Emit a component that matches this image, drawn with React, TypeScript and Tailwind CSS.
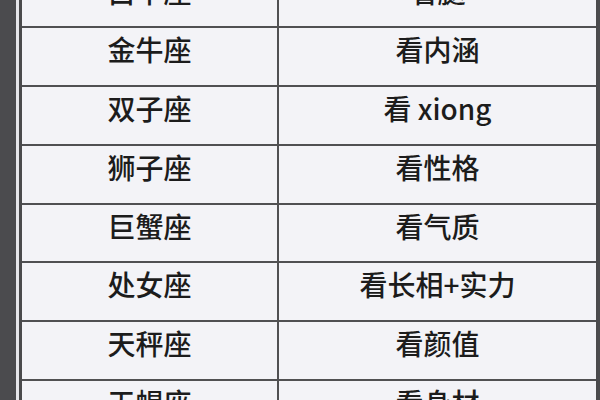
const rows = [
  ['白羊座', '看腿'],
  ['金牛座', '看内涵'],
  ['双子座', '看 xiong'],
  ['狮子座', '看性格'],
  ['巨蟹座', '看气质'],
  ['处女座', '看长相+实力'],
  ['天秤座', '看颜值'],
  ['天蝎座', '看身材'],
]

export default function App() {
  return (
    <div
      className="flex h-[400px] w-[600px] overflow-hidden bg-[#4b4b4e]"
      style={{ fontFamily: '"Noto Sans CJK SC", "Noto Sans", sans-serif' }}
    >
      <div className="w-[16px] shrink-0" />
      <div className="w-[3px] shrink-0 bg-[#e6e6ea]" />
      <div className="flex-1 border-l-[3px] border-r-[2px] border-[#4a4a4c] bg-[#f3f3f7] mr-[2px]">
        <div className="-mt-[30.5px] flex flex-col">
          {rows.map(([sign, trait]) => (
            <div
              key={sign}
              className="grid h-[58.8px] grid-cols-[257px_1fr] border-b-2 border-[#505052]"
            >
              <div className="flex items-center justify-center border-r-2 border-[#505052] pb-[16px] text-[28px] font-medium text-[#1c1c1c]">
                {sign}
              </div>
              <div className="flex items-center justify-center pb-[16px] text-[28px] font-medium text-[#1c1c1c]">
                {trait}
              </div>
            </div>
          ))}
        </div>
      </div>
    </div>
  )
}
